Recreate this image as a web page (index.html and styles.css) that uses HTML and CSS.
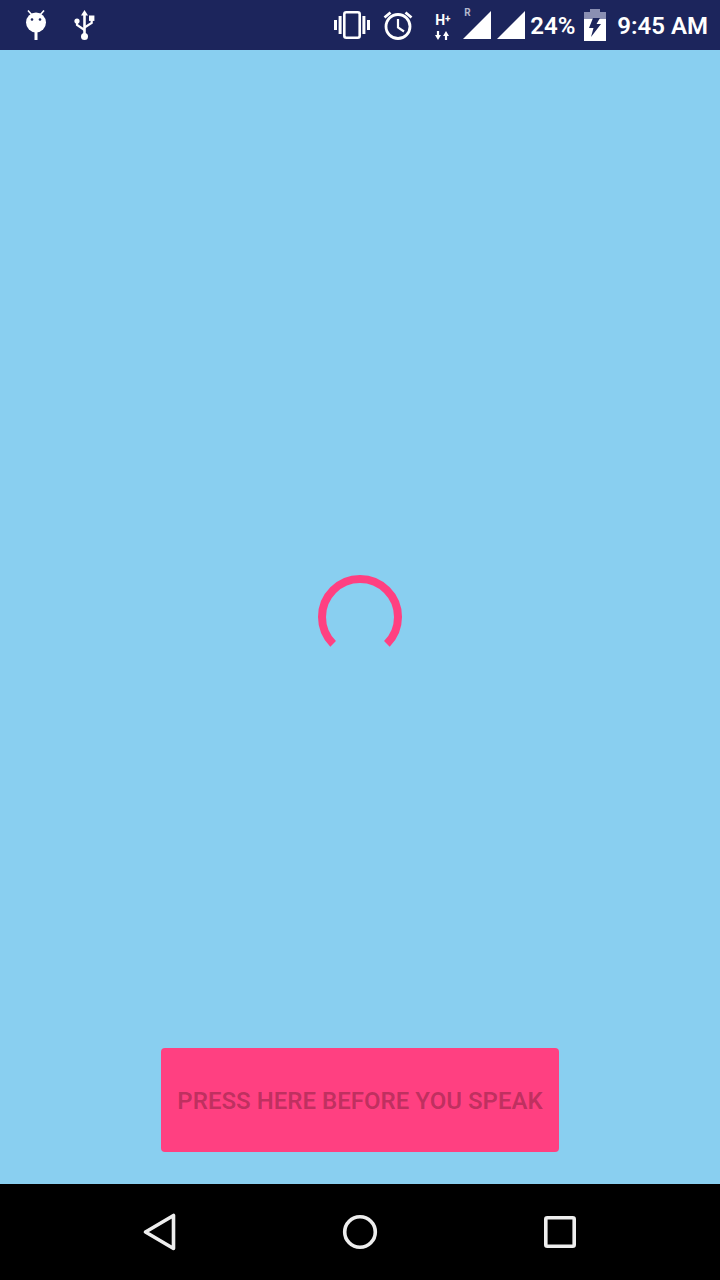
FILE: index.html
```html
<!DOCTYPE html>
<html lang="en">
<head>
    <meta charset="UTF-8">
    <title>Speech</title>
    <link rel="stylesheet" href="styles.css">
</head>
<body>

<div class="phone">
    <header class="status-bar">
        <div class="status-left">
            <svg class="icon-android" width="22" height="30" viewBox="0 0 22 30">
                <circle cx="11" cy="12.5" r="10" fill="#fff"/>
                <path d="M3 0.5 L6.5 4.5 M19 0.5 L15.5 4.5" stroke="#fff" stroke-width="1.6"/>
                <rect x="9.5" y="22" width="3" height="8" fill="#fff"/>
                <circle cx="7" cy="9.5" r="1.3" fill="#1c255c"/>
                <circle cx="15" cy="9.5" r="1.3" fill="#1c255c"/>
            </svg>
            <svg class="icon-usb" width="21" height="30" viewBox="0 0 21 30">
                <path d="M10.5 3 V26" stroke="#fff" stroke-width="2.6" fill="none"/>
                <path d="M10.5 0 L14 5.5 H7 Z" fill="#fff"/>
                <circle cx="10.5" cy="26.5" r="3.5" fill="#fff"/>
                <circle cx="3" cy="11" r="2.6" fill="#fff"/>
                <rect x="15" y="5.5" width="5.4" height="5.4" fill="#fff"/>
                <path d="M3 12 V15 L10.5 20 M17.7 10 V13 L10.5 17.5" stroke="#fff" stroke-width="2.2" fill="none"/>
            </svg>
        </div>
        <div class="status-right">
            <svg class="icon-vibrate" width="36" height="28" viewBox="0 0 36 28">
                <rect x="10.3" y="1.3" width="15.4" height="25.4" rx="2" fill="none" stroke="#fff" stroke-width="2.6"/>
                <rect x="0" y="9" width="3" height="10" fill="#fff"/>
                <rect x="4.6" y="5" width="3" height="18" fill="#fff"/>
                <rect x="28.4" y="5" width="3" height="18" fill="#fff"/>
                <rect x="33" y="9" width="3" height="10" fill="#fff"/>
            </svg>
            <svg class="icon-alarm" width="30" height="30" viewBox="0 0 30 30">
                <circle cx="15" cy="16.5" r="12" fill="none" stroke="#fff" stroke-width="2.8"/>
                <path d="M15 9 V17.5 L21 21.5" fill="none" stroke="#fff" stroke-width="2.2"/>
                <path d="M1.5 7.5 L7.5 2.5 M28.5 7.5 L22.5 2.5" stroke="#fff" stroke-width="2.8"/>
            </svg>
            <div class="net-type">
                <span class="net-label">H<sup>+</sup></span>
                <svg width="14" height="9" viewBox="0 0 14 9">
                    <path d="M3 0 V5 M11 9 V4" fill="none" stroke="#fff" stroke-width="2.2"/>
                    <path d="M0 4 H6 L3 9 Z M8 5 H14 L11 0 Z" fill="#fff"/>
                </svg>
            </div>
            <div class="signal roaming">
                <span class="roaming-label">R</span>
                <svg width="28" height="28" viewBox="0 0 28 28"><path d="M28 0 V28 H0 Z" fill="#fff"/></svg>
            </div>
            <svg class="signal-2" width="28" height="28" viewBox="0 0 28 28"><path d="M28 0 V28 H0 Z" fill="#fff"/></svg>
            <span class="battery-pct">24%</span>
            <svg class="icon-battery" width="22" height="32" viewBox="0 0 22 32">
                <path d="M6 0 H16 V3 H22 V10 H0 V3 H6 Z" fill="#8a8fb2"/>
                <path d="M0 10 H22 V32 H0 Z" fill="#fff"/>
                <path d="M9 9 H16 L12.5 15 H17 L7 28 L9.5 19 H5 Z" fill="#1c255c"/>
            </svg>
            <span class="clock">9:45 AM</span>
        </div>
    </header>

    <main class="content">
        <svg class="spinner" width="84" height="84" viewBox="0 0 84 84">
            <path d="M15.13 68.87 A38 38 0 1 1 68.87 68.87" fill="none" stroke="#ff4081" stroke-width="8"/>
        </svg>
        <button class="speak-btn" disabled>PRESS HERE BEFORE YOU SPEAK</button>
    </main>

    <nav class="nav-bar">
        <svg width="40" height="40" viewBox="0 0 40 40">
            <path d="M5.5 20 L33.5 3.5 V36.5 Z" fill="none" stroke="#eee" stroke-width="3.6" stroke-linejoin="round"/>
        </svg>
        <svg width="40" height="40" viewBox="0 0 40 40">
            <circle cx="20" cy="20" r="15.3" fill="none" stroke="#eee" stroke-width="3.6"/>
        </svg>
        <svg width="40" height="40" viewBox="0 0 40 40">
            <rect x="5.8" y="5.8" width="28.4" height="28.4" rx="1.5" fill="none" stroke="#eee" stroke-width="3.6"/>
        </svg>
    </nav>
</div>

</body>
</html>
```

FILE: styles.css
```css
html, body {
    margin: 0;
    padding: 0;
}

body {
    font-family: Roboto, "Liberation Sans", sans-serif;
}

.phone {
    width: 720px;
    height: 1280px;
    display: flex;
    flex-direction: column;
    background: #89cff0;
}

.status-bar {
    height: 50px;
    background: #1c255c;
    color: #fff;
    display: flex;
    justify-content: space-between;
    align-items: center;
    flex-shrink: 0;
}

.status-bar svg {
    display: block;
}

.status-left {
    display: flex;
    align-items: center;
    gap: 27px;
    padding-left: 25px;
}

.status-right {
    display: flex;
    align-items: center;
    padding-right: 12px;
}

.icon-alarm {
    margin-left: 13px;
}

.net-type {
    width: 16px;
    margin-left: 22px;
    margin-top: 3px;
    display: flex;
    flex-direction: column;
    gap: 4px;
}

.net-label {
    font-size: 14px;
    line-height: 14px;
    font-weight: 700;
}

.net-label sup {
    font-size: 10px;
    line-height: 0;
    vertical-align: 3px;
}

.signal {
    position: relative;
    margin-left: 12px;
}

.roaming-label {
    position: absolute;
    left: 1px;
    top: -3px;
    font-size: 10px;
    line-height: 10px;
    font-weight: 700;
    color: #b4b7cc;
}

.signal-2 {
    margin-left: 6px;
}

.battery-pct {
    margin-left: 5px;
    margin-top: 2px;
    font-size: 24px;
    font-weight: 600;
}

.icon-battery {
    margin-left: 9px;
}

.clock {
    margin-left: 11px;
    margin-top: 2px;
    font-size: 24px;
    font-weight: 600;
}

/* spinner and button share one grid cell: spinner centred, button at the bottom */
.content {
    flex: 1;
    display: grid;
    justify-items: center;
}

.spinner {
    grid-area: 1 / 1;
    align-self: center;
}

.speak-btn {
    grid-area: 1 / 1;
    align-self: end;
    width: 398px;
    height: 104px;
    margin-bottom: 32px;
    padding: 2px 0 0;
    background: #ff4081;
    color: rgba(0, 0, 0, 0.26);
    border: none;
    border-radius: 4px;
    font-family: Roboto, sans-serif;
    font-size: 24px;
    font-weight: 600;
}

.nav-bar {
    height: 96px;
    background: #000;
    display: flex;
    align-items: center;
    justify-content: center;
    gap: 160px;
    flex-shrink: 0;
}
```
